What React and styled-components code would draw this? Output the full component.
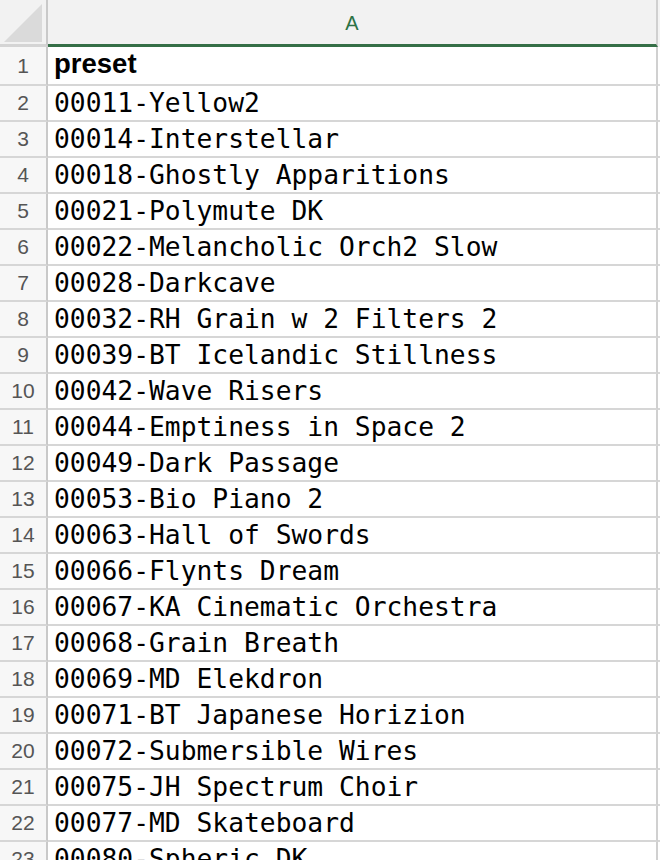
import React from "react";
import styled, { createGlobalStyle } from "styled-components";

const presets = [
  "00011-Yellow2",
  "00014-Interstellar",
  "00018-Ghostly Apparitions",
  "00021-Polymute DK",
  "00022-Melancholic Orch2 Slow",
  "00028-Darkcave",
  "00032-RH Grain w 2 Filters 2",
  "00039-BT Icelandic Stillness",
  "00042-Wave Risers",
  "00044-Emptiness in Space 2",
  "00049-Dark Passage",
  "00053-Bio Piano 2",
  "00063-Hall of Swords",
  "00066-Flynts Dream",
  "00067-KA Cinematic Orchestra",
  "00068-Grain Breath",
  "00069-MD Elekdron",
  "00071-BT Japanese Horizion",
  "00072-Submersible Wires",
  "00075-JH Spectrum Choir",
  "00077-MD Skateboard",
  "00080-Spheric DK",
];

const GlobalStyle = createGlobalStyle`
  html, body {
    margin: 0;
    padding: 0;
    background: #ffffff;
    overflow: hidden;
  }
  body {
    width: 660px;
    height: 860px;
  }
`;

const Sheet = styled.div`
  display: grid;
  grid-template-columns: 48px 610px 2px;
  width: 660px;
  background: #ffffff;
`;

const Corner = styled.div`
  position: relative;
  width: 46px;
  height: 44px;
  background: #f2f2f2;
  border-right: 2px solid #c9c9c9;
  border-bottom: 3px solid #d4d4d4;

  &::after {
    content: "";
    position: absolute;
    left: 4px;
    top: 4px;
    width: 38px;
    height: 38px;
    background: #dadada;
    clip-path: polygon(100% 0, 100% 100%, 0 100%);
  }
`;

const ColHeader = styled.div`
  display: flex;
  align-items: center;
  justify-content: center;
  box-sizing: border-box;
  height: 47px;
  padding-top: 3px;
  background: #f2f2f2;
  border-right: 2px solid #d0d0d0;
  border-bottom: 3px solid #356f47;
  font-family: "Liberation Sans", Arial, sans-serif;
  font-size: 20px;
  color: #2c7245;
`;

const Edge = styled.div`
  box-sizing: border-box;
  height: ${(p) => p.$h}px;
  background: ${(p) => (p.$head ? "#f4f4f4" : "#ffffff")};
  border-bottom: 2px solid ${(p) => (p.$head ? "#f4f4f4" : "#d6d6d6")};
`;

const RowNum = styled.div`
  display: flex;
  align-items: flex-end;
  justify-content: center;
  box-sizing: border-box;
  height: ${(p) => p.$h}px;
  padding-bottom: ${(p) => (p.$first ? 6 : 5)}px;
  background: #f7f7f7;
  border-right: 2px solid #c9c9c9;
  border-bottom: 2px solid #d6d6d6;
  font-family: "Liberation Sans", Arial, sans-serif;
  font-size: 21px;
  line-height: normal;
  color: #555555;
`;

const Cell = styled.div`
  display: flex;
  align-items: flex-end;
  box-sizing: border-box;
  height: ${(p) => p.$h}px;
  padding: 0 0 ${(p) => (p.$bold ? 4 : 2)}px 6px;
  border-right: 2px solid #d0d0d0;
  border-bottom: 2px solid #d6d6d6;
  font-family: ${(p) =>
    p.$bold
      ? `"Liberation Sans", Arial, sans-serif`
      : `"DejaVu Sans Mono", "Liberation Mono", monospace`};
  font-weight: ${(p) => (p.$bold ? 700 : 400)};
  font-size: ${(p) => (p.$bold ? "27.5px" : "26.3px")};
  line-height: normal;
  color: #000000;
  white-space: nowrap;
`;

const Row = ({ num, text, bold, h }) => (
  <>
    <RowNum $h={h} $first={bold}>
      {num}
    </RowNum>
    <Cell $h={h} $bold={bold}>
      {text}
    </Cell>
    <Edge $h={h} />
  </>
);

export default function App() {
  return (
    <>
      <GlobalStyle />
      <Sheet>
        <Corner />
        <ColHeader>A</ColHeader>
        <Edge $head $h={47} />
        <Row num={1} text="preset" bold h={39} />
        {presets.map((p, i) => (
          <Row key={p} num={i + 2} text={p} h={36} />
        ))}
      </Sheet>
    </>
  );
}
